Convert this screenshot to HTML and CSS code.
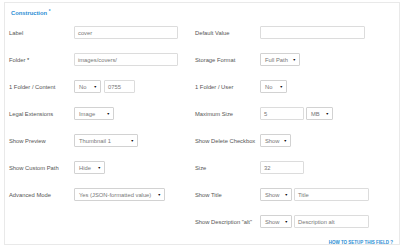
FILE: index.html
```html
<!DOCTYPE html>
<html lang="en">
<head>
    <meta charset="UTF-8">
    <meta name="viewport" content="width=device-width, initial-scale=1.0">
    <title>Construction</title>
    <link rel="stylesheet" href="styles.css">
</head>
<body>
    <div class="panel">
        <h3 class="title">Construction <sup>*</sup></h3>
        <div class="fields">
            <div class="field">
                <label>Label</label>
                <div class="input w104">cover</div>
            </div>
            <div class="field">
                <label>Default Value</label>
                <div class="input w105"></div>
            </div>

            <div class="field">
                <label>Folder <span class="req">*</span></label>
                <div class="input w104">images/covers/</div>
            </div>
            <div class="field">
                <label>Storage Format</label>
                <div class="select w40"><span>Full Path</span><i>&#9660;</i></div>
            </div>

            <div class="field">
                <label>1 Folder / Content</label>
                <div class="select w27"><span>No</span><i>&#9660;</i></div>
                <div class="input w31 gap3">0755</div>
            </div>
            <div class="field">
                <label>1 Folder / User</label>
                <div class="select w27"><span>No</span><i>&#9660;</i></div>
            </div>

            <div class="field">
                <label>Legal Extensions</label>
                <div class="select w40"><span>Image</span><i>&#9660;</i></div>
            </div>
            <div class="field">
                <label>Maximum Size</label>
                <div class="input w44">5</div>
                <div class="select w27 gap2"><span>MB</span><i>&#9660;</i></div>
            </div>

            <div class="field">
                <label>Show Preview</label>
                <div class="select w64"><span>Thumbnail 1</span><i>&#9660;</i></div>
            </div>
            <div class="field">
                <label>Show Delete Checkbox</label>
                <div class="select w31"><span>Show</span><i>&#9660;</i></div>
            </div>

            <div class="field">
                <label>Show Custom Path</label>
                <div class="select w31"><span>Hide</span><i>&#9660;</i></div>
            </div>
            <div class="field">
                <label>Size</label>
                <div class="input w44">32</div>
            </div>

            <div class="field">
                <label>Advanced Mode</label>
                <div class="select w91"><span>Yes (JSON-formatted value)</span><i>&#9660;</i></div>
            </div>
            <div class="field">
                <label>Show Title</label>
                <div class="select w32"><span>Show</span><i>&#9660;</i></div>
                <div class="input w75 gap2">Title</div>
            </div>

            <div class="field right">
                <label>Show Description "alt"</label>
                <div class="select w32"><span>Show</span><i>&#9660;</i></div>
                <div class="input w75 gap2">Description alt</div>
            </div>
        </div>
        <div class="help"><a href="#">How to setup this field ?</a></div>
    </div>
</body>
</html>
```

FILE: styles.css
```css
body{
    margin: 0;
    background: #fff;
    font-family: "Liberation Sans", Arial, sans-serif;
    color: #555;
}

.panel{
    box-sizing: border-box;
    width: 396px;
    height: 243px;
    margin: 2px 0 0 4px;
    padding: 5px 5px 0 4px;
    border: 1px solid #e9e9e9;
    background: #fff;
}

.title{
    margin: 0 0 1px 2px;
    font-size: 5.8px;
    line-height: 10px;
    font-weight: bold;
    color: #2a8dd4;
}
.title sup{
    font-size: 4.5px;
    vertical-align: 2px;
    line-height: 0;
}

.fields{
    display: grid;
    grid-template-columns: 186px 1fr;
    grid-auto-rows: 27px;
}

.field{
    display: flex;
    align-items: center;
}
.field.right{
    grid-column: 2;
}

.field label{
    width: 65px;
    flex: none;
    font-size: 5.8px;
    color: #555;
}
.req{
    color: #333;
}

.input,
.select{
    box-sizing: border-box;
    height: 13px;
    flex: none;
    display: flex;
    align-items: center;
    border: 1px solid #dcdcdc;
    border-radius: 1px;
    background: #fff;
    font-size: 5.8px;
    color: #777;
    white-space: nowrap;
    overflow: hidden;
}
.input{
    padding: 0 3px;
}
.select{
    justify-content: space-between;
    padding: 0 3px 0 4px;
    border-color: #d2d2d2;
}
.select i{
    font-style: normal;
    font-size: 3.6px;
    color: #111;
}

.gap2{ margin-left: 2px; }
.gap3{ margin-left: 3px; }

.w27{ width: 27px; }
.w31{ width: 31px; }
.w32{ width: 32px; }
.w40{ width: 40px; }
.w44{ width: 44px; }
.w64{ width: 64px; }
.w75{ width: 75px; }
.w91{ width: 91px; }
.w104{ width: 104px; }
.w105{ width: 105px; }

.help{
    text-align: right;
    line-height: 7px;
    padding-right: 1px;
}
.help a{
    font-size: 4.5px;
    font-weight: bold;
    text-transform: uppercase;
    color: #2a8dd4;
    text-decoration: none;
}
```
